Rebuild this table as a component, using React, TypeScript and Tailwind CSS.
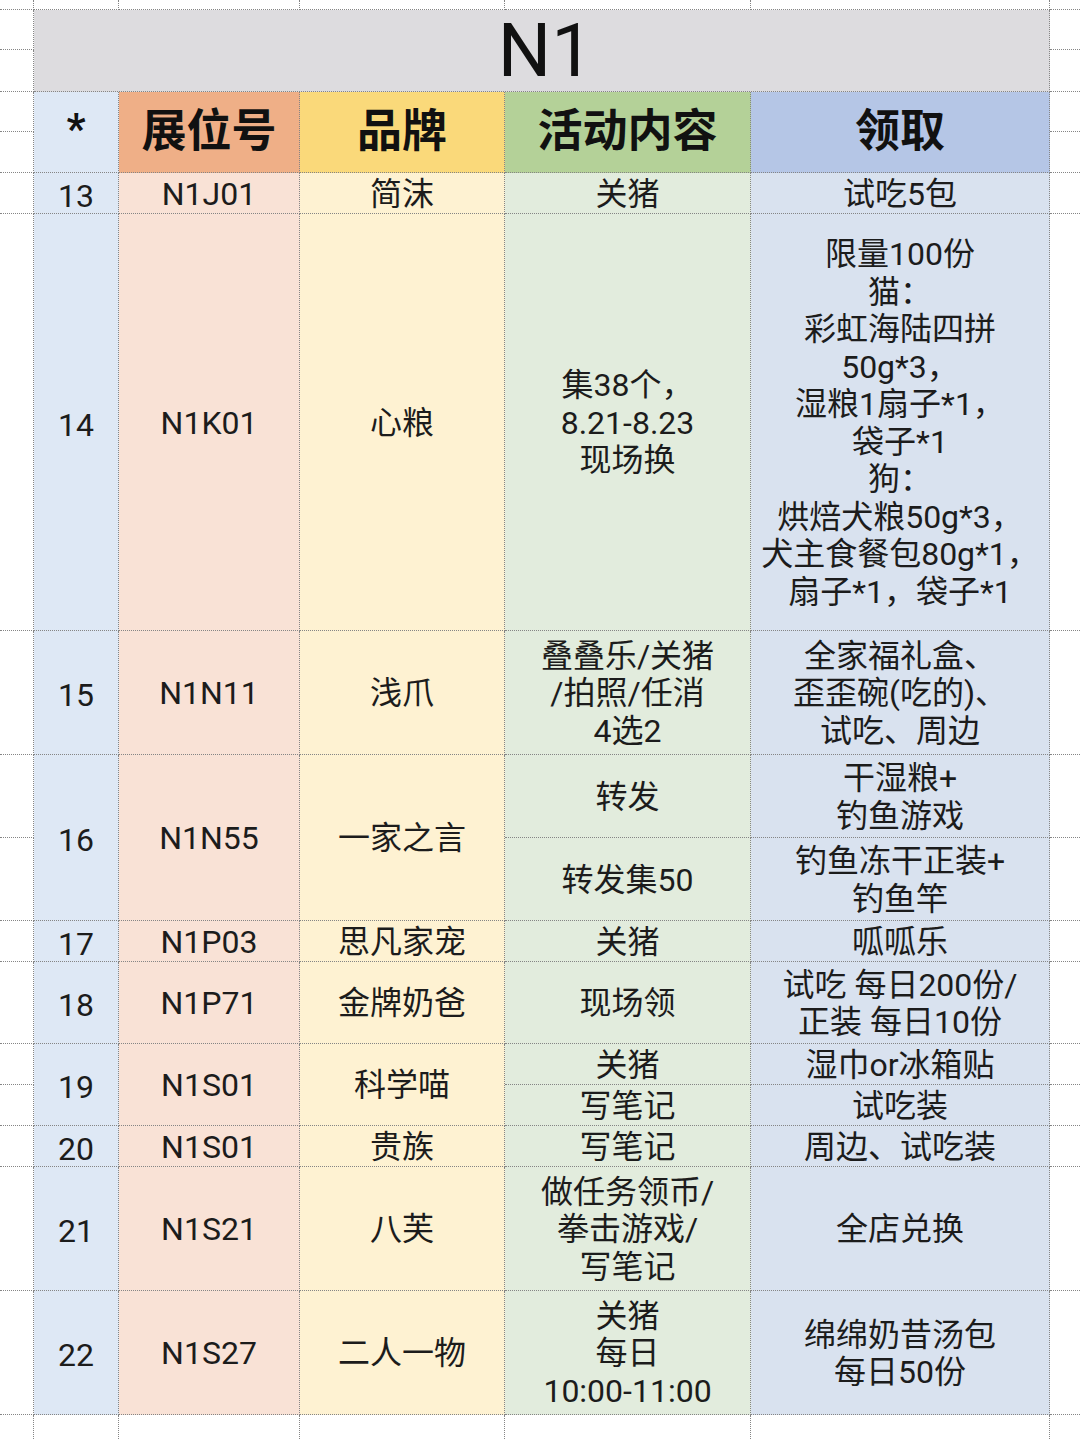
import React from "react";

const B = "border-[#858585] border-dotted";
const font = { fontFamily: "Roboto, 'Noto Sans CJK SC', sans-serif" };

type CellProps = { bg: string; span?: string; children?: React.ReactNode; extra?: string };

function Cell({ bg, span = "", children, extra = "pt-[3px]" }: CellProps) {
  return (
    <div
      className={`${bg} ${span} ${B} border-r border-b flex flex-col items-center justify-center text-center text-[32px] leading-[37.5px] text-[#1c1c1c] whitespace-nowrap ${extra}`}
    >
      {children}
    </div>
  );
}

function LM() {
  return <div className={`${B} border-r border-b`} />;
}
function RM() {
  return <div className={`${B} border-b`} />;
}

const C1 = "bg-[#dee8f5]";
const C2 = "bg-[#f9e2d6]";
const C3 = "bg-[#fef2d2]";
const C4 = "bg-[#e2ecdd]";
const C5 = "bg-[#d9e2ef]";

function Lines({ items }: { items: string[] }) {
  return (
    <>
      {items.map((t, i) => (
        <span key={i} className="block">
          {t}
        </span>
      ))}
    </>
  );
}

function Row({
  num,
  booth,
  brand,
  act,
  get,
}: {
  num: string;
  booth: string;
  brand: string;
  act: string[];
  get: string[];
}) {
  return (
    <>
      <LM />
      <Cell bg={C1} extra="pt-[7px]">{num}</Cell>
      <Cell bg={C2}>{booth}</Cell>
      <Cell bg={C3}>{brand}</Cell>
      <Cell bg={C4}>
        <Lines items={act} />
      </Cell>
      <Cell bg={C5}>
        <Lines items={get} />
      </Cell>
      <RM />
    </>
  );
}

export default function App() {
  return (
    <div className="w-[1080px] h-[1439px] bg-white overflow-hidden" style={font}>
      <div className="grid grid-cols-[34px_85px_181px_205px_246px_299px_30px] grid-rows-[10px_40px_42px_40px_41px_41px_417px_124px_83px_83px_41px_82px_41px_41px_41px_124px_124px_24px]">
        {/* top strip */}
        <div className={`${B} border-r border-b`} />
        <div className={`${B} border-r border-b`} />
        <div className={`${B} border-r border-b`} />
        <div className={`${B} border-r border-b`} />
        <div className={`${B} border-r border-b`} />
        <div className={`${B} border-r border-b`} />
        <div className={`${B} border-b`} />

        {/* title */}
        <LM />
        <div
          className={`col-span-5 row-span-2 bg-[#dddcdf] ${B} border-r border-b flex items-center justify-center pl-[8px] text-[75px] leading-none font-normal text-[#111]`}
        >
          N1
        </div>
        <RM />
        <LM />
        <RM />

        {/* header */}
        <LM />
        <div className={`row-span-2 ${C1} ${B} border-r border-b flex items-center justify-center pb-[8px] text-[42px] font-bold text-[#111]`}>
          *
        </div>
        <div className={`row-span-2 bg-[#efaf87] ${B} border-r border-b flex items-center justify-center text-[45px] font-bold text-[#111]`}>
          展位号
        </div>
        <div className={`row-span-2 bg-[#fad97a] ${B} border-r border-b flex items-center justify-center text-[45px] font-bold text-[#111]`}>
          品牌
        </div>
        <div className={`row-span-2 bg-[#b4d198] ${B} border-r border-b flex items-center justify-center text-[45px] font-bold text-[#111]`}>
          活动内容
        </div>
        <div className={`row-span-2 bg-[#b5c6e6] ${B} border-r border-b flex items-center justify-center text-[45px] font-bold text-[#111]`}>
          领取
        </div>
        <RM />
        <LM />
        <RM />

        <Row num="13" booth="N1J01" brand="简沫" act={["关猪"]} get={["试吃5包"]} />
        <Row
          num="14"
          booth="N1K01"
          brand="心粮"
          act={["集38个，", "8.21-8.23", "现场换"]}
          get={[
            "限量100份",
            "猫：",
            "彩虹海陆四拼",
            "50g*3，",
            "湿粮1扇子*1，",
            "袋子*1",
            "狗：",
            "烘焙犬粮50g*3，",
            "犬主食餐包80g*1，",
            "扇子*1，袋子*1",
          ]}
        />
        <Row
          num="15"
          booth="N1N11"
          brand="浅爪"
          act={["叠叠乐/关猪", "/拍照/任消", "4选2"]}
          get={["全家福礼盒、", "歪歪碗(吃的)、", "试吃、周边"]}
        />

        {/* 16 */}
        <LM />
        <Cell bg={C1} span="row-span-2" extra="pt-[7px]">16</Cell>
        <Cell bg={C2} span="row-span-2">N1N55</Cell>
        <Cell bg={C3} span="row-span-2">一家之言</Cell>
        <Cell bg={C4}>转发</Cell>
        <Cell bg={C5}>
          <Lines items={["干湿粮+", "钓鱼游戏"]} />
        </Cell>
        <RM />
        <LM />
        <Cell bg={C4}>转发集50</Cell>
        <Cell bg={C5}>
          <Lines items={["钓鱼冻干正装+", "钓鱼竿"]} />
        </Cell>
        <RM />

        <Row num="17" booth="N1P03" brand="思凡家宠" act={["关猪"]} get={["呱呱乐"]} />
        <Row
          num="18"
          booth="N1P71"
          brand="金牌奶爸"
          act={["现场领"]}
          get={["试吃 每日200份/", "正装 每日10份"]}
        />

        {/* 19 */}
        <LM />
        <Cell bg={C1} span="row-span-2" extra="pt-[7px]">19</Cell>
        <Cell bg={C2} span="row-span-2">N1S01</Cell>
        <Cell bg={C3} span="row-span-2">科学喵</Cell>
        <Cell bg={C4}>关猪</Cell>
        <Cell bg={C5}>湿巾or冰箱贴</Cell>
        <RM />
        <LM />
        <Cell bg={C4}>写笔记</Cell>
        <Cell bg={C5}>试吃装</Cell>
        <RM />

        <Row num="20" booth="N1S01" brand="贵族" act={["写笔记"]} get={["周边、试吃装"]} />
        <Row
          num="21"
          booth="N1S21"
          brand="八芙"
          act={["做任务领币/", "拳击游戏/", "写笔记"]}
          get={["全店兑换"]}
        />
        <Row
          num="22"
          booth="N1S27"
          brand="二人一物"
          act={["关猪", "每日", "10:00-11:00"]}
          get={["绵绵奶昔汤包", "每日50份"]}
        />

        {/* bottom strip */}
        <div className={`${B} border-r`} />
        <div className={`${B} border-r`} />
        <div className={`${B} border-r`} />
        <div className={`${B} border-r`} />
        <div className={`${B} border-r`} />
        <div className={`${B} border-r`} />
        <div />
      </div>
    </div>
  );
}
